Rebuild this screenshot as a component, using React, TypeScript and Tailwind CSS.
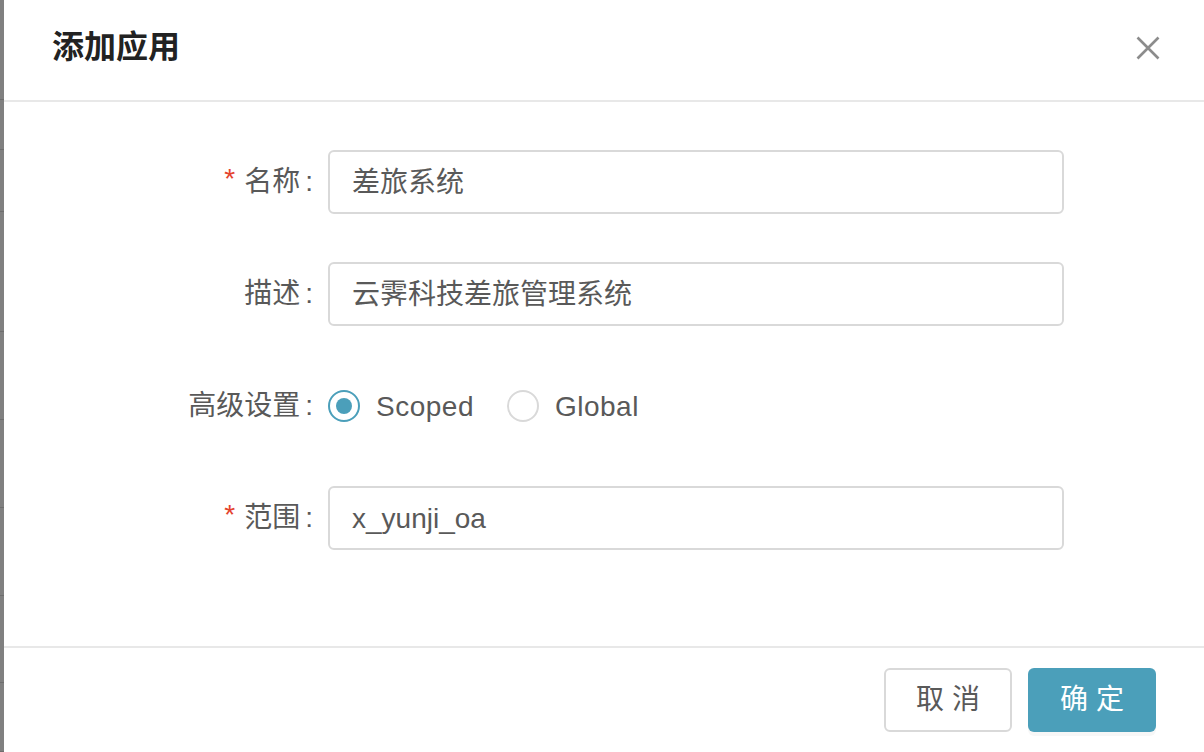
import React from "react";

const FONT = { fontFamily: '"Liberation Sans", "Noto Sans CJK SC", sans-serif' };

function Label({ text, required }: { text: string; required?: boolean }) {
  return (
    <div className="w-[324px] shrink-0 flex items-center justify-end text-[28px] text-[#595959]">
      {required && <span className="text-[#e4432d] mr-[9px] relative top-[-3px]">*</span>}
      <span>{text}</span>
      <span className="ml-[5px] mr-[15px]">:</span>
    </div>
  );
}

function Input({ value }: { value: string }) {
  return (
    <div className="w-[736px] h-[64px] border-2 border-[#d9d9d9] rounded-[6px] pl-[22px] pt-[2px] flex items-center text-[28px] text-[#595959] bg-white">
      {value}
    </div>
  );
}

function Radio({ label, checked }: { label: string; checked?: boolean }) {
  return (
    <div className="flex items-center mr-[17px]">
      <div
        className={
          "w-[32px] h-[32px] rounded-full border-2 flex items-center justify-center bg-white " +
          (checked ? "border-[#4b9fba]" : "border-[#d9d9d9]")
        }
      >
        {checked && <div className="w-[16px] h-[16px] rounded-full bg-[#4b9fba]" />}
      </div>
      <span className="px-[16px] pt-[2px] text-[28px] tracking-[0.5px] text-[#595959]">{label}</span>
    </div>
  );
}

export default function App() {
  const segs = [100, 50, 62, 120, 88, 88, 88, 87, 69];
  return (
    <div className="flex w-[1204px] h-[752px] overflow-hidden bg-white" style={FONT}>
      <div className="w-[4px] shrink-0 flex flex-col bg-[#808080]">
        {segs.map((h, i) => (
          <div key={i} className="w-full border-b border-[#6e6e6e]" style={{ height: h }} />
        ))}
      </div>
      <div className="flex-1 flex flex-col bg-white">
        <div className="h-[102px] shrink-0 border-b-2 border-[#e8e8e8] flex items-center justify-between pl-[48px] pr-[44px] pb-[6px]">
          <div className="text-[32px] font-semibold text-[#222222]">添加应用</div>
          <svg width="24" height="24" viewBox="0 0 24 24" className="mt-[2px]">
            <path d="M1.5 1.5 L22.5 22.5 M22.5 1.5 L1.5 22.5" stroke="#8c8c8c" strokeWidth="2.6" strokeLinecap="butt" fill="none" />
          </svg>
        </div>
        <div className="flex-1 flex flex-col pt-[48px] gap-[48px]">
          <div className="flex items-center h-[64px]">
            <Label text="名称" required />
            <Input value="差旅系统" />
          </div>
          <div className="flex items-center h-[64px]">
            <Label text="描述" />
            <Input value="云霁科技差旅管理系统" />
          </div>
          <div className="flex items-center h-[64px]">
            <Label text="高级设置" />
            <Radio label="Scoped" checked />
            <Radio label="Global" />
          </div>
          <div className="flex items-center h-[64px]">
            <Label text="范围" required />
            <Input value="x_yunji_oa" />
          </div>
        </div>
        <div className="h-[106px] shrink-0 border-t-2 border-[#e8e8e8] flex justify-end items-start gap-[16px] pt-[20px] pr-[48px]">
          <button className="w-[128px] h-[64px] border-2 border-[#d9d9d9] rounded-[6px] bg-white text-[28px] text-[#595959]">
            取 消
          </button>
          <button className="w-[128px] h-[64px] rounded-[6px] bg-[#4b9fba] text-[28px] text-white shadow-[0_4px_0_rgba(0,0,0,0.03)]">
            确 定
          </button>
        </div>
      </div>
    </div>
  );
}
